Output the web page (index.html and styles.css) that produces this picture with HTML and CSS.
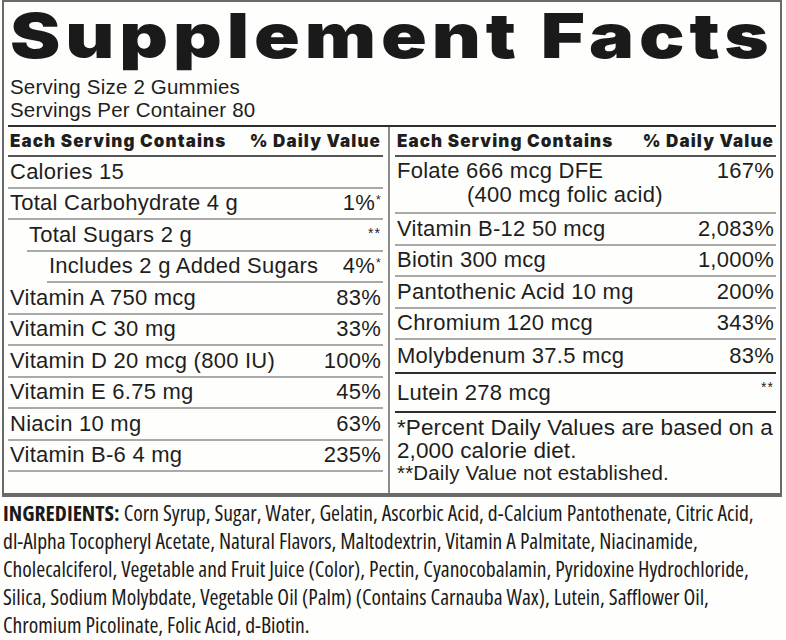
FILE: index.html
```html
<!DOCTYPE html>
<html>
<head>
<meta charset="utf-8">
<link rel="stylesheet" href="styles.css">
</head>
<body>
<div class="label">
  <h1 class="title"><span class="title-text">Supplement Facts</span></h1>
  <div class="serving">
    <div>Serving Size 2 Gummies</div>
    <div>Servings Per Container 80</div>
  </div>
  <div class="facts">
    <div class="col col-left">
      <div class="row head"><span>Each Serving Contains</span><span>% Daily Value</span></div>
      <div class="row"><span>Calories 15</span><span></span></div>
      <div class="row"><span>Total Carbohydrate 4 g</span><span>1%<sup>*</sup></span></div>
      <div class="row ind1"><span>Total Sugars 2 g</span><span class="stars">**</span></div>
      <div class="row ind2"><span>Includes 2 g Added Sugars</span><span>4%<sup>*</sup></span></div>
      <div class="row"><span>Vitamin A 750 mcg</span><span>83%</span></div>
      <div class="row"><span>Vitamin C 30 mg</span><span>33%</span></div>
      <div class="row"><span>Vitamin D 20 mcg (800 IU)</span><span>100%</span></div>
      <div class="row"><span>Vitamin E 6.75 mg</span><span>45%</span></div>
      <div class="row"><span>Niacin 10 mg</span><span>63%</span></div>
      <div class="row"><span>Vitamin B-6 4 mg</span><span>235%</span></div>
    </div>
    <div class="divider"></div>
    <div class="col col-right">
      <div class="row head"><span>Each Serving Contains</span><span>% Daily Value</span></div>
      <div class="row tall"><span>Folate 666 mcg DFE<br><span class="sub">(400 mcg folic acid)</span></span><span>167%</span></div>
      <div class="row"><span>Vitamin B-12 50 mcg</span><span>2,083%</span></div>
      <div class="row"><span>Biotin 300 mcg</span><span>1,000%</span></div>
      <div class="row"><span>Pantothenic Acid 10 mg</span><span>200%</span></div>
      <div class="row"><span>Chromium 120 mcg</span><span>343%</span></div>
      <div class="row thick"><span>Molybdenum 37.5 mcg</span><span>83%</span></div>
      <div class="row thick lutein"><span>Lutein 278 mcg</span><span class="stars">**</span></div>
      <div class="foot">
        <div>*Percent Daily Values are based on a<br>2,000 calorie diet.</div>
        <div class="foot2">**Daily Value not established.</div>
      </div>
    </div>
  </div>
</div>
<div class="ingredients">
  <div><b>INGREDIENTS:</b> Corn Syrup, Sugar, Water, Gelatin, Ascorbic Acid, d-Calcium Pantothenate, Citric Acid,</div>
  <div>dl-Alpha Tocopheryl Acetate, Natural Flavors, Maltodextrin, Vitamin A Palmitate, Niacinamide,</div>
  <div>Cholecalciferol, Vegetable and Fruit Juice (Color), Pectin, Cyanocobalamin, Pyridoxine Hydrochloride,</div>
  <div>Silica, Sodium Molybdate, Vegetable Oil (Palm) (Contains Carnauba Wax), Lutein, Safflower Oil,</div>
  <div>Chromium Picolinate, Folic Acid, d-Biotin.</div>
</div>
</body>
</html>
```

FILE: styles.css
```css
* { box-sizing: border-box; }
html, body { margin: 0; padding: 0; background: #fefefc; }
body {
  width: 786px;
  height: 640px;
  overflow: hidden;
  color: #1e1e1e;
  font-family: "Liberation Sans", Arial, sans-serif;
}
.label {
  margin-left: 2px;
  width: 780px;
  height: 497px;
  border: 2px solid #6a6a6a;
  border-bottom-width: 4px;
  display: flex;
  flex-direction: column;
}
.title {
  margin: 3px 0 0 6px;
  height: 62px;
  width: 620px;
  font-family: Inter, "Liberation Sans", sans-serif;
  font-weight: 900;
  font-size: 62px;
  line-height: 62px;
  color: #1a1a1a;
  white-space: nowrap;
}
.title-text {
  display: inline-block;
  letter-spacing: 4px;
  transform: scaleX(1.22);
  transform-origin: left center;
}
.serving {
  padding-left: 6px;
  margin-top: 8px;
  font-size: 20.5px;
  line-height: 23px;
  letter-spacing: 0.2px;
}
.facts {
  flex: 1;
  margin: 4px 4px 0 4px;
  border-top: 2px solid #2e2e2e;
  display: grid;
  grid-template-columns: 375px 2px 381px;
  column-gap: 5px;
}
.divider { background: #8c8c8c; }
.col { display: flex; flex-direction: column; }
.row {
  display: flex;
  justify-content: space-between;
  align-items: center;
  height: 31.5px;
  padding: 0 2px;
  border-bottom: 2px solid #a9a9a9;
  font-size: 22px;
  letter-spacing: 0.25px;
  white-space: nowrap;
}
.row.head {
  height: 30px;
  border-bottom-color: #555;
  font-family: Inter, "Liberation Sans", sans-serif;
  font-weight: 900;
  font-size: 17px;
  letter-spacing: 1.1px;
}
.row sup { font-size: 12px; vertical-align: 0; position: relative; top: -6px; margin-left: 1px; }
.stars { font-size: 14px; align-self: flex-start; padding-top: 5px; letter-spacing: 1px; }
.ind1 { margin-left: 19px; }
.ind2 { margin-left: 39px; }
.row.tall { height: 57px; align-items: flex-start; padding-top: 2px; line-height: 24px; }
.sub { padding-left: 70px; }
.row.thick { border-bottom-color: #2e2e2e; height: 34px; }
.row.lutein { height: 39px; }
.foot {
  padding: 3px 2px 0;
  font-size: 22.5px;
  line-height: 23px;
  letter-spacing: 0.1px;
}
.foot2 { font-size: 20.5px; line-height: 21px; letter-spacing: 0.15px; }
.ingredients {
  margin: 2px 0 0 3px;
  font-family: "Open Sans", "Liberation Sans", sans-serif;
  font-stretch: 75%;
  font-size: 21.6px;
  line-height: 28px;
  color: #1a1a1a;
  white-space: nowrap;
}
.ingredients b { font-weight: bold; }
```
